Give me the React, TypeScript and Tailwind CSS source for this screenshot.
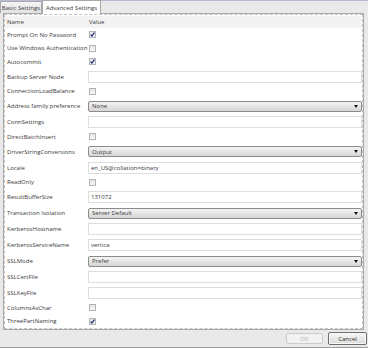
import React from "react";

type Row =
  | { label: string; kind: "check"; checked: boolean }
  | { label: string; kind: "text"; value?: string }
  | { label: string; kind: "select"; value: string };

const rows: Row[] = [
  { label: "Prompt On No Password", kind: "check", checked: true },
  { label: "Use Windows Authentication", kind: "check", checked: false },
  { label: "Autocommit", kind: "check", checked: true },
  { label: "Backup Server Node", kind: "text" },
  { label: "ConnectionLoadBalance", kind: "check", checked: false },
  { label: "Address family preference", kind: "select", value: "None" },
  { label: "ConnSettings", kind: "text" },
  { label: "DirectBatchInsert", kind: "check", checked: false },
  { label: "DriverStringConversions", kind: "select", value: "Output" },
  { label: "Locale", kind: "text", value: "en_US@collation=binary" },
  { label: "ReadOnly", kind: "check", checked: false },
  { label: "ResultBufferSize", kind: "text", value: "131072" },
  { label: "Transaction Isolation", kind: "select", value: "Server Default" },
  { label: "KerberosHostname", kind: "text" },
  { label: "KerberosServiceName", kind: "text", value: "vertica" },
  { label: "SSLMode", kind: "select", value: "Prefer" },
  { label: "SSLCertFile", kind: "text" },
  { label: "SSLKeyFile", kind: "text" },
  { label: "ColumnsAsChar", kind: "check", checked: false },
  { label: "ThreePartNaming", kind: "check", checked: true },
];

function Checkbox({ checked }: { checked: boolean }) {
  return (
    <span className="ml-[1px] flex h-[7px] w-[7px] items-center justify-center border border-[#b4b4b4] bg-gradient-to-b from-[#e4e4e4] to-[#f8f8f8]">
      {checked ? (
        <svg width="5" height="5" viewBox="0 0 5 5">
          <path d="M0.6 2.6 L1.9 4.1 L4.4 0.6" fill="none" stroke="#1c2a7a" strokeWidth="1.2" />
        </svg>
      ) : null}
    </span>
  );
}

function Value({ row }: { row: Row }) {
  if (row.kind === "check") return <Checkbox checked={row.checked} />;
  if (row.kind === "select") {
    return (
      <div className="flex h-[11px] w-full items-center justify-between rounded-[2px] border border-[#8c8c8c] bg-gradient-to-b from-[#f4f4f4] to-[#d6d6d6] pl-[3px] pr-[3px]">
        <span>{row.value}</span>
        <svg width="4" height="3" viewBox="0 0 4 3">
          <path d="M0 0 H4 L2 3 Z" fill="#111" />
        </svg>
      </div>
    );
  }
  return (
    <div className="flex h-[12px] w-full items-center border border-[#dedede] bg-white pl-[2px]">
      {row.value ?? ""}
    </div>
  );
}

export default function App() {
  return (
    <div
      className="flex h-[348px] w-[368px] flex-col overflow-hidden bg-[#e9e9e9] text-[6px] leading-none text-[#3a3a3a]"
      style={{ fontFamily: '"Open Sans", "Noto Sans", sans-serif' }}
    >
      <div className="flex h-[13px] items-end border-t border-[#b6bdd0]">
        <div className="flex h-[12px] w-[42px] items-center justify-center border border-b-0 border-[#a8a8a8] bg-gradient-to-b from-[#f4f4f4] to-[#e2e2e2]">
          Basic Settings
        </div>
        <div className="relative z-10 -mb-px flex h-[14px] w-[59px] items-center justify-center border border-b-0 border-[#a8a8a8] bg-white">
          Advanced Settings
        </div>
      </div>

      <div className="ml-[3px] w-[361px] border border-[#a9a9a9] bg-white">
        <div className="border border-dashed border-[#c4c4c4] pt-px">
          <div className="flex h-[12px] items-center bg-[#f3f3f3]">
            <span className="w-[83px] pl-[2px]">Name</span>
            <span className="pl-px">Value</span>
          </div>
          {rows.map((row) => (
            <div
              key={row.label}
              className={`flex items-center ${row.kind === "check" ? "h-[13.5px]" : "h-[16px]"}`}
            >
              <span className="w-[83px] shrink-0 pl-[2px]">{row.label}</span>
              <div className="flex flex-1 items-center">
                <Value row={row} />
              </div>
            </div>
          ))}
        </div>
      </div>

      <div className="flex flex-1 items-center justify-end gap-[5px] border-b border-[#9a9a9a] pr-px">
        <button
          type="button"
          disabled
          className="flex h-[11px] w-[37px] items-center justify-center rounded-[2px] border border-[#cacaca] bg-[#f2f2f2] text-[#b4b4b4]"
        >
          OK
        </button>
        <button
          type="button"
          className="flex h-[13px] w-[39px] items-center justify-center rounded-[2px] border border-[#6e6e6e] bg-gradient-to-b from-[#f6f6f6] to-[#dcdcdc] text-[#2a2a2a] shadow-[inset_0_0_0_1px_#f8f8f8]"
        >
          Cancel
        </button>
      </div>
    </div>
  );
}
